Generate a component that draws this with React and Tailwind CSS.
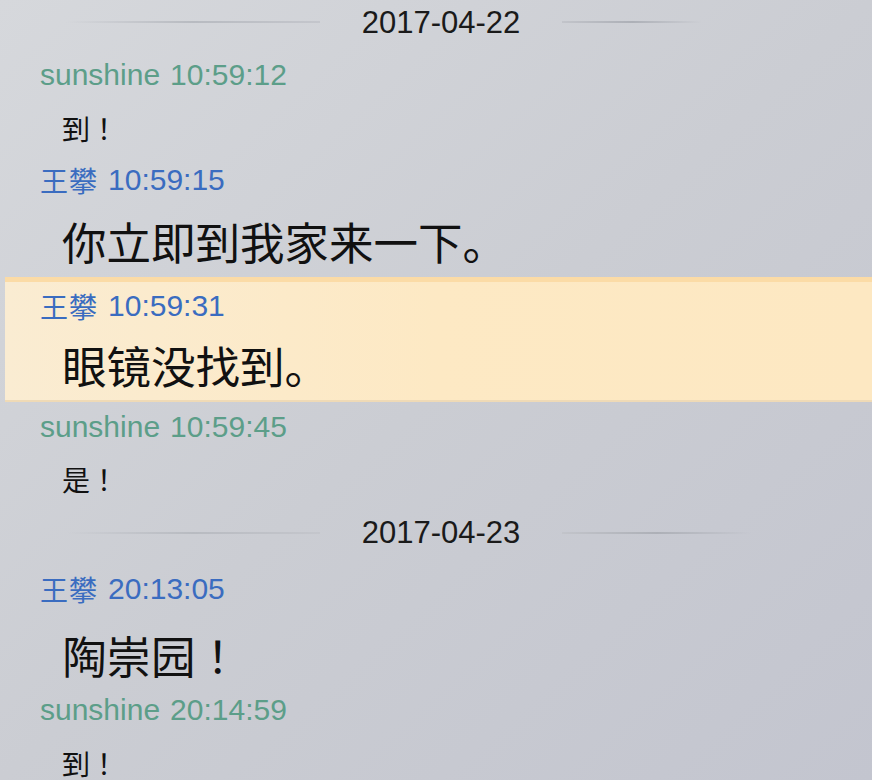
import React from 'react';

const SANS = "font-['Liberation_Sans',Arial,sans-serif]";
const CJK = "font-['Noto_Sans_CJK_SC',sans-serif]";
const MSG = "font-['Noto_Sans_CJK_JP','Noto_Sans_CJK_SC',sans-serif]";

function DateRow({ date, height, rightEnd }) {
  return (
    <div className={`flex items-center ${height}`}>
      <div className="ml-[66px] w-[254px] h-[2px] bg-gradient-to-r from-transparent via-[#b8bbc1] to-[#c4c6cc]" />
      <div className={`w-[242px] text-center text-[31px] leading-none text-[#1a1a1a] ${SANS}`}>{date}</div>
      <div className={`h-[2px] ${rightEnd} bg-gradient-to-r from-[#c2c4ca] via-[#adb0b7] to-transparent`} />
    </div>
  );
}

function Header({ name, time, height, cjkName }) {
  const color = cjkName ? 'text-[#3a6cc0]' : 'text-[#5c9e89]';
  return (
    <div className={`flex items-center pl-[40px] ${height}`}>
      <span className={`leading-none ${color} ${cjkName ? CJK + ' text-[28px] tracking-[1px]' : SANS + ' text-[30px]'}`}>{name}</span>
      <span className={`ml-[10px] text-[30px] leading-none ${color} ${SANS}`}>{time}</span>
    </div>
  );
}

function Message({ text, big, height }) {
  return (
    <div className={`flex items-center pl-[62px] ${height}`}>
      <span className={`${MSG} leading-none text-[#111] ${big ? 'text-[44.5px]' : 'text-[28px]'}`}>{text}</span>
    </div>
  );
}

export default function App() {
  return (
    <div className="w-[872px] h-[780px] overflow-hidden bg-gradient-to-br from-[#d6d8dc] via-[#cbcdd3] to-[#c3c5cf]">
      <div className="-mt-[4px] flex flex-col">
        <DateRow date="2017-04-22" height="h-[52px]" rightEnd="w-[140px]" />
        <Header name="sunshine" time="10:59:12" height="h-[54px]" />
        <Message text="到！" height="h-[52px]" />
        <Header name="王攀" time="10:59:15" height="h-[52px]" cjkName />
        <Message text="你立即到我家来一下。" height="h-[71px]" big />

        {/* highlighted message */}
        <div className="ml-[5px] h-[125px] flex flex-col border-t-[5px] border-[#fbdba6] bg-gradient-to-r from-[#faecd2] via-[#fde9c4] to-[#fde8c2] shadow-[inset_0_-2px_0_#efdab6]">
          <div className="-ml-[5px] flex flex-col">
            <Header name="王攀" time="10:59:31" height="h-[48px]" cjkName />
            <Message text="眼镜没找到。" height="h-[71px]" big />
          </div>
        </div>

        <Header name="sunshine" time="10:59:45" height="h-[50px]" />
        <Message text="是！" height="h-[54px]" />
        <DateRow date="2017-04-23" height="h-[53px]" rightEnd="w-[190px]" />
        <Header name="王攀" time="20:13:05" height="h-[59px]" cjkName />
        <Message text="陶崇园！" height="h-[74px]" big />
        <Header name="sunshine" time="20:14:59" height="h-[36px]" />
        <Message text="到！" height="h-[70px]" />
      </div>
    </div>
  );
}
